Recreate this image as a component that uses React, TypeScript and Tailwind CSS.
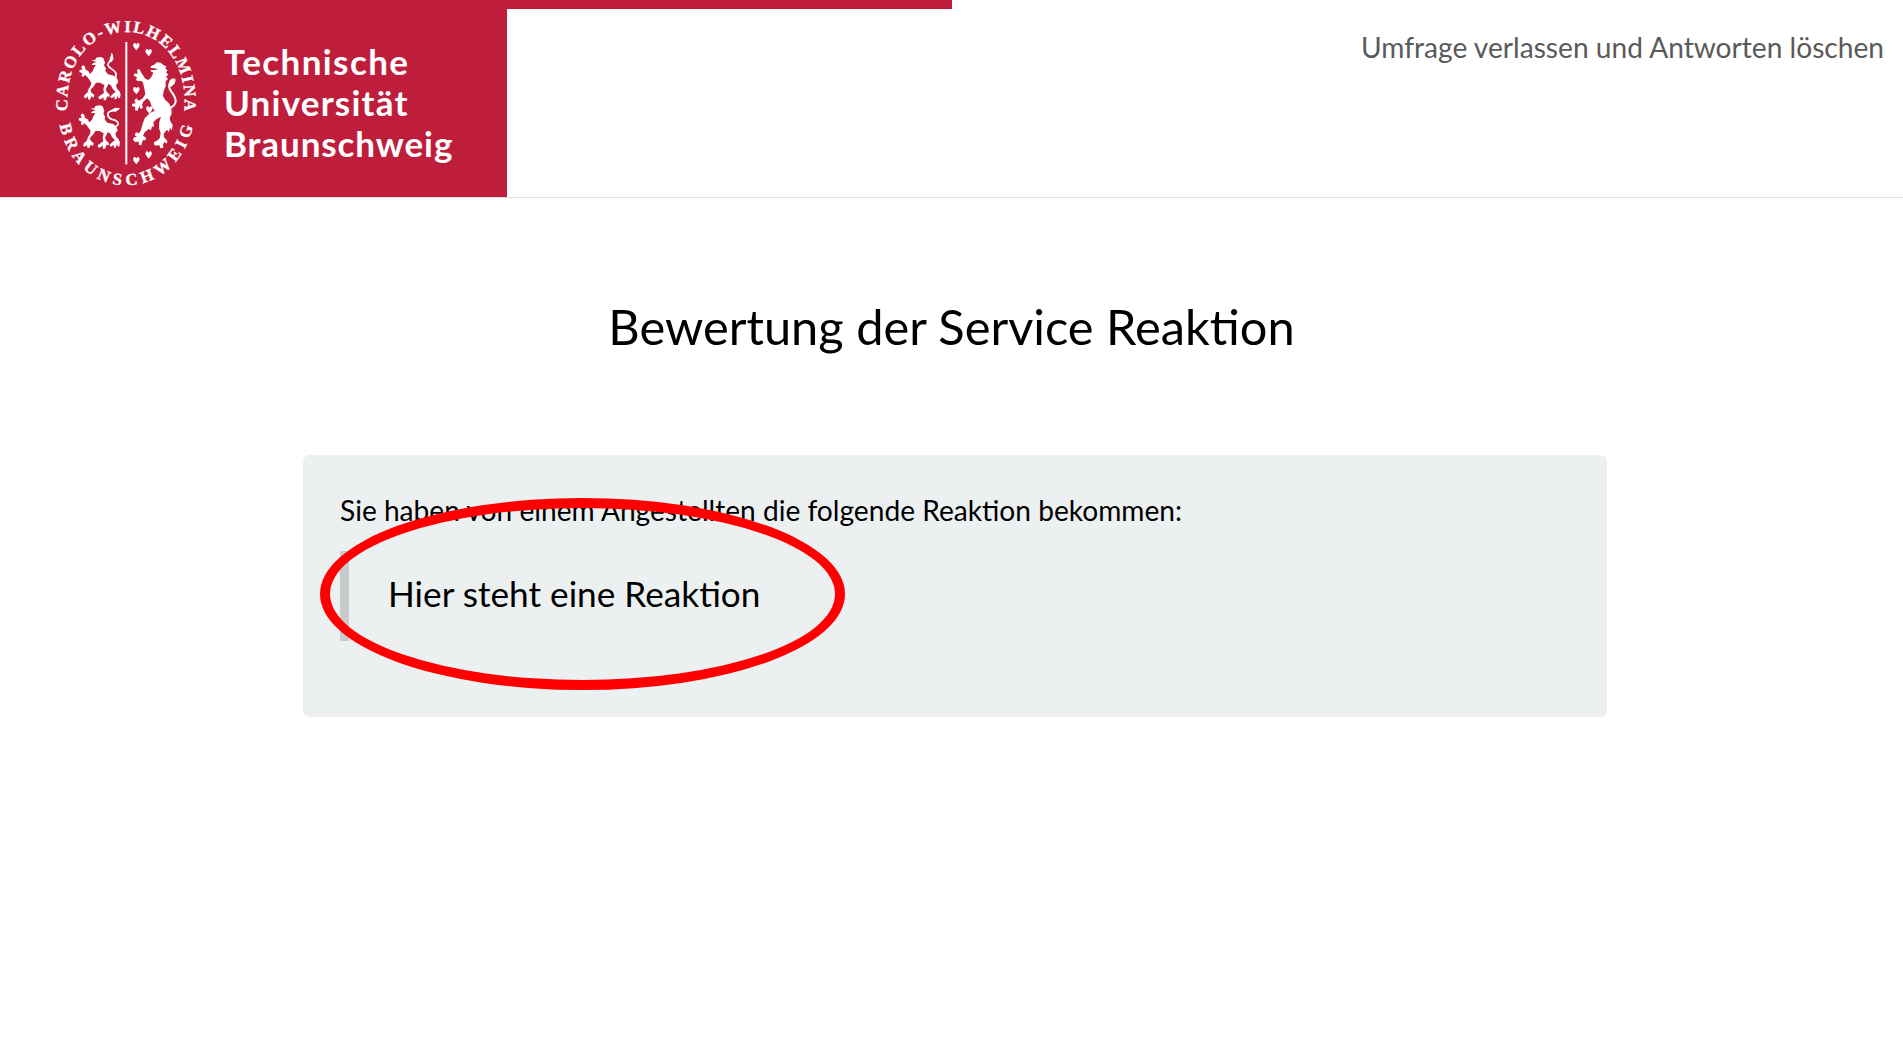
const HEARTS: [number, number][] = [
  [289, 139], [326, 157], [289, 271], [328, 329], [326, 464], [289, 481],
];

const LION_BODY =
  "M154 181 L166 179 L168 173 L182 171 L190 174 L195 188 L192 196 L198 206 L196 213 L204 223 L222 227 L231 235 L235 246 L228 256 L231 266 L238 273 L242 283 L240 294 L236 295 L232 288 L229 298 L224 298 L223 289 L216 295 L210 291 L219 281 L227 276 L218 266 L212 255 L205 252 L201 261 L197 268 L201 277 L209 284 L208 291 L202 289 L197 301 L191 301 L190 291 L184 297 L177 298 L175 291 L184 284 L192 279 L190 268 L193 255 L180 248 L168 248 L162 258 L151 270 L155 278 L163 285 L161 293 L154 289 L150 299 L144 298 L143 289 L137 295 L131 292 L134 284 L142 278 L146 266 L152 257 L154 248 L147 238 L142 231 L135 225 L130 231 L124 227 L127 220 L118 216 L119 209 L127 209 L124 201 L129 195 L135 200 L137 209 L145 213 L150 222 L158 214 L163 202 L168 195 L154 194 L160 189 L169 186 Z";

const BIG_LION =
  "M333 198 L343 194 L350 187 L362 188 L370 195 L379 199 L376 206 L383 211 L378 217 L385 224 L378 230 L384 237 L377 244 L377 259 L371 273 L369 288 L376 300 L387 310 L394 324 L395 341 L389 353 L391 364 L398 374 L396 391 L390 384 L387 396 L381 389 L371 401 L372 412 L382 422 L381 431 L373 426 L369 434 L370 443 L361 445 L358 435 L351 437 L342 434 L342 426 L351 422 L359 415 L362 400 L357 385 L358 365 L363 350 L351 356 L340 367 L342 381 L336 379 L333 391 L326 387 L314 397 L309 407 L318 413 L317 421 L309 420 L306 428 L304 436 L296 434 L296 424 L287 427 L279 420 L282 412 L291 411 L284 405 L288 397 L297 400 L303 390 L307 374 L314 355 L330 339 L344 332 L335 319 L329 302 L321 295 L310 305 L306 315 L309 323 L302 327 L298 319 L293 332 L285 331 L286 321 L275 318 L277 311 L287 310 L283 301 L289 295 L296 302 L307 296 L316 283 L313 266 L309 248 L304 242 L295 244 L288 240 L291 232 L281 227 L284 220 L293 222 L291 209 L298 207 L304 218 L309 226 L316 236 L326 240 L334 231 L340 218 L331 213 L333 210 L345 210 L354 208 L344 205 L332 204 Z";

function Crest() {
  return (
    <svg viewBox="0 0 540 591" className="h-[197px] w-[180px] shrink-0" fill="#fff" aria-hidden="true">
      <defs>
        <path id="ringTop" d="M83 333 C72 190 150 96 258 96 C366 96 444 190 433 333 L432 350" />
        <path id="ringBottom" d="M59 375 C82 490 165 556 258 556 C351 556 438 490 461 367 L464 350" />
      </defs>
      <g fontFamily="Liberation Serif, serif" fontWeight="700" fontSize="50" stroke="#fff" strokeWidth="1">
        <text>
          <textPath href="#ringTop" textLength="668">CAROLO-WILHELMINA</textPath>
        </text>
        <text>
          <textPath href="#ringBottom" textLength="582">BRAUNSCHWEIG</textPath>
        </text>
      </g>
      <rect x="256" y="126" width="6" height="367" />
      <path d={LION_BODY} />
      <path d={LION_BODY} transform="translate(-2 145)" />
      <g fill="none" stroke="#fff" strokeWidth="5" strokeLinecap="round">
        <path d="M225 235 C240 210 201 207 204 193 C206 184 217 184 216 163" />
        <path d="M223 381 C244 374 233 361 216 358 C202 354 199 339 211 334 C221 330 226 334 236 326" />
        <path d="M385 325 C420 314 406 291 394 275 C383 260 385 247 403 238" strokeWidth="6" />
      </g>
      <path d="M208 182 L215 158 L221 176 L214 187 Z M213 330 L226 323 L240 325 L226 336 Z M388 254 L389 241 L399 234 L399 243 L408 239 L403 252 L392 262 Z" />
      <path d={BIG_LION} />
      <g>
        {HEARTS.map(([x, y]) => (
          <path
            key={`${x}-${y}`}
            transform={`translate(${x} ${y})`}
            d="M0 12 L-8 2 Q-12 -6 -6 -10 Q-1 -11 0 -5 Q1 -11 6 -10 Q12 -6 8 2 Z"
          />
        ))}
      </g>
    </svg>
  );
}

export default function App() {
  return (
    <div className="min-h-[1063px] w-full overflow-hidden bg-white font-[Lato,sans-serif] text-black">
      <header className="flex h-[198px] items-start justify-between border-b border-[#dfdfdf]">
        <div className="flex">
          <div className="flex h-[197px] w-[507px] bg-[#be1e3c]">
            <div className="ml-10">
              <Crest />
            </div>
            <div className="ml-1 pt-[41px] text-[35px] leading-[41px] font-bold whitespace-nowrap text-white">
              <div className="tracking-[1.4px]">Technische</div>
              <div className="tracking-[1.2px]">Universität</div>
              <div className="tracking-[0.9px]">Braunschweig</div>
            </div>
          </div>
          <div className="h-[9px] w-[445px] bg-[#be1e3c]" />
        </div>
        <a className="mt-[29px] mr-[19px] text-[28.13px] leading-[37px] whitespace-nowrap text-[#5a5a5a]">
          Umfrage verlassen und Antworten löschen
        </a>
      </header>
      <h1 className="mt-[96px] text-center text-[48.75px] leading-[64px]">Bewertung der Service Reaktion</h1>
      <main className="relative mt-[97px] ml-[303px] h-[262px] w-[1304px] rounded-[7px] bg-[#ecf0f1] px-[37px] pt-[37px]">
        <p className="text-[28.13px] leading-[37px]">
          Sie haben von einem Angestellten die folgende Reaktion bekommen:
        </p>
        <blockquote className="mt-[22px] flex h-[90px] items-center border-l-[9px] border-[#c7cbcc] pb-[7px] pl-[39px] text-[35.2px] leading-[46px]">
          Hier steht eine Reaktion
        </blockquote>
        <div className="absolute top-[43px] left-[17px] h-[192px] w-[525px] rounded-[50%] border-[10px] border-[#ff0000]" />
      </main>
    </div>
  );
}
